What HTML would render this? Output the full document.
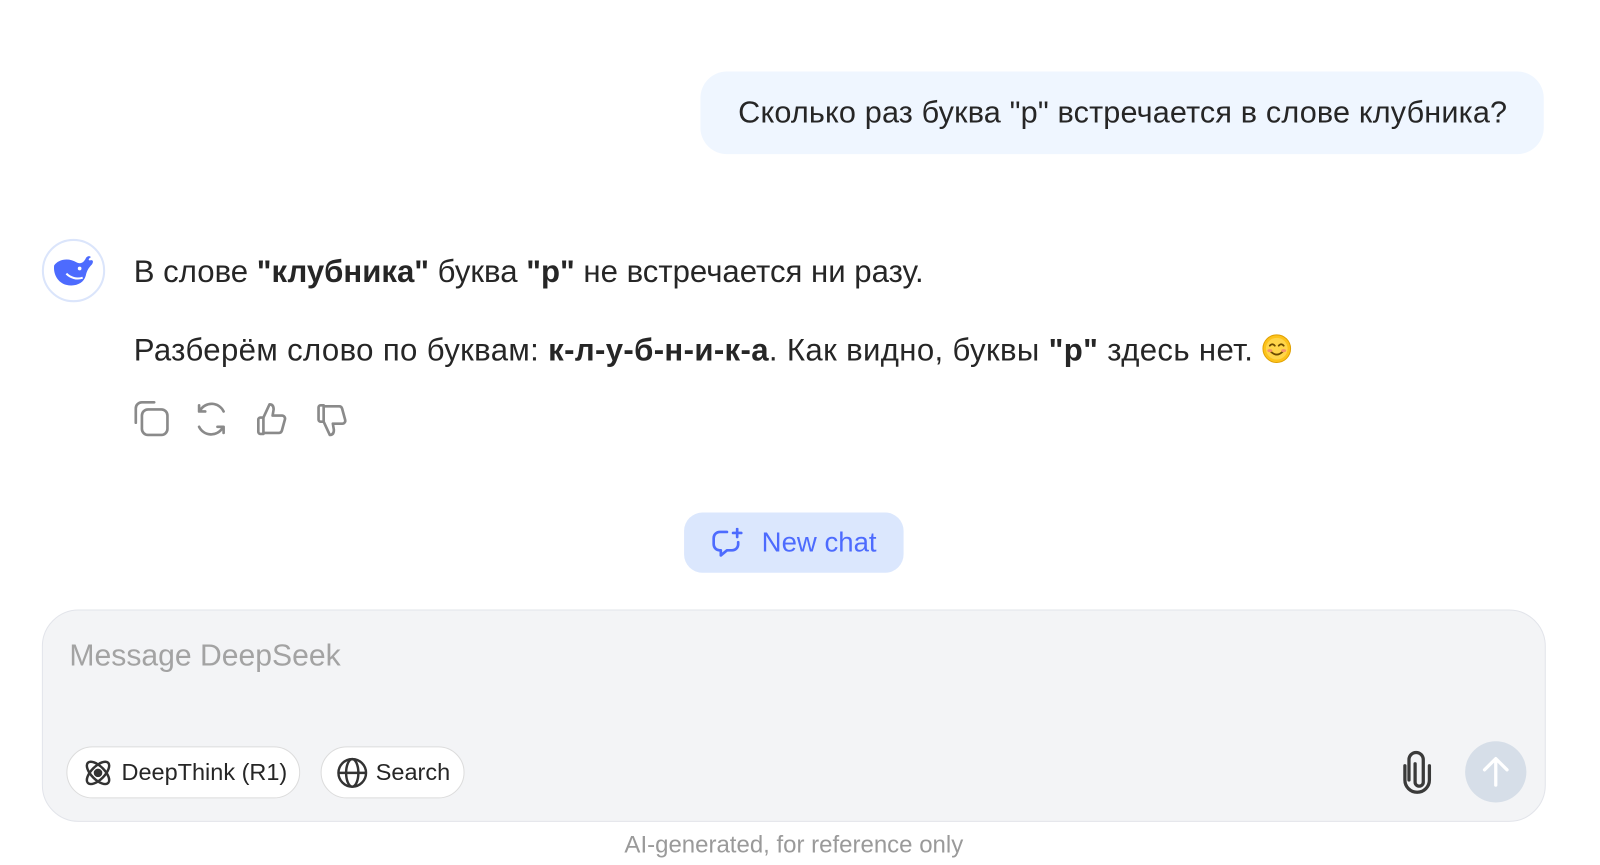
<!DOCTYPE html>
<html><head><meta charset="utf-8"><style>
*{margin:0;padding:0;box-sizing:border-box}
body{width:1600px;height:865px;background:#fff;font-family:"Liberation Sans","DejaVu Sans",sans-serif;color:#262626;position:relative;overflow:hidden}
#w{position:absolute;left:0;top:0;width:1567px;height:847px;transform:scale(1.021);transform-origin:0 0}
.abs{position:absolute}
.bubble{left:686px;top:70px;width:826px;height:81px;background:#eff6ff;border-radius:26px;font-size:30px;line-height:81px;padding-left:37px;white-space:nowrap;letter-spacing:0.15px}
.av{left:41px;top:234px;width:62px;height:62px;border-radius:50%;border:2px solid #dbe5fb;display:flex;align-items:center;justify-content:center}
.t{left:131px;font-size:30.5px;white-space:nowrap;line-height:36px}
b{font-weight:700}
.nc{left:670px;top:502px;width:215px;height:59px;background:#dbe7fd;border-radius:18px;color:#4d6bfe;font-size:27px;display:flex;align-items:center;padding-left:26px;gap:18px}
.comp{left:41px;top:597px;width:1473px;height:208px;background:#f3f4f6;border:1px solid #e2e4ea;border-radius:36px}
.pill{top:731px;height:51px;border:1.5px solid #dcdcdc;border-radius:26px;background:#fff;display:flex;align-items:center;font-size:23px;color:#262626;padding-left:14px;gap:7px}
</style></head><body><div id="w">
<div class="abs bubble">Сколько раз буква "р" встречается в слове клубника?</div>
<div class="abs av"><svg width="42" height="34" viewBox="0 0 42 34"><path d="M2 12 C6 6 16 4 24 9 C28 11 31 9 33 5 C34 3 37 2 38 4 C36 5 35 7 37 7 C40 6 41 8 39 11 C36 14 34 17 33 22 C31 30 22 33 14 31 C6 29 1 21 2 12Z" fill="#4d6bfe"/><path d="M14 20 C18 24 24 26 30 24" stroke="#fff" stroke-width="2" fill="none"/><circle cx="27" cy="15" r="1.8" fill="#fff"/></svg></div>
<div class="abs t" style="top:248px">В слове <b>"клубника"</b> буква <b>"р"</b> не встречается ни разу.</div>
<div class="abs t" style="top:325px;letter-spacing:0.35px">Разберём слово по буквам: <b>к-л-у-б-н-и-к-а</b>. Как видно, буквы <b>"р"</b> здесь нет. <svg width="29" height="29" viewBox="0 0 30 30" style="vertical-align:-3px"><circle cx="15" cy="15" r="14" fill="#fcc21b" stroke="#e0a000" stroke-width="1"/><circle cx="15" cy="15" r="11" fill="#ffd54a"/><path d="M8 12q2.5-3 5 0M17 12q2.5-3 5 0" stroke="#6b4a00" stroke-width="1.8" fill="none" stroke-linecap="round"/><path d="M9 18q6 6 12 0" stroke="#6b4a00" stroke-width="1.8" fill="none" stroke-linecap="round"/><ellipse cx="8" cy="17" rx="2.5" ry="1.5" fill="#f6916a"/><ellipse cx="22" cy="17" rx="2.5" ry="1.5" fill="#f6916a"/></svg></div>
<svg class="abs" style="left:130px;top:392px" width="220" height="38" viewBox="0 0 220 38" fill="none" stroke="#8a8a8a" stroke-width="2.6" stroke-linecap="round" stroke-linejoin="round">
<rect x="9" y="9" width="25" height="25" rx="6"/><path d="M3 22V8a6 6 0 0 1 6-6h12"/>
<path d="M89 11a13 13 0 0 0-23-1M65 5v6h6M65 26a13 13 0 0 0 23 1M89 32v-6h-6"/>
<g transform="translate(7 0)"><path d="M121 17v16h-3a2 2 0 0 1-2-2V19a2 2 0 0 1 2-2zM121 17l6-13c3 0 4 2 4 5l-1 6h9a3 3 0 0 1 3 4l-3 11a3 3 0 0 1-3 2h-15"/></g>
<g transform="translate(5 0)"><path d="M182 21V5h-3a2 2 0 0 0-2 2v12a2 2 0 0 0 2 2zM182 21l6 13c3 0 4-2 4-5l-1-6h9a3 3 0 0 0 3-4l-3-11a3 3 0 0 0-3-2h-15"/></g>
</svg>
<div class="abs nc"><svg width="32" height="30" viewBox="0 0 32 30" fill="none" stroke="#4d6bfe" stroke-width="2.6" stroke-linecap="round" stroke-linejoin="round"><path d="M16 4H9a6 6 0 0 0-6 6v6a6 6 0 0 0 6 6h1v5l6-5h5a6 6 0 0 0 6-6v-2"/><path d="M26 1v8M22 5h8"/></svg><span>New chat</span></div>
<div class="abs comp"></div>
<div class="abs" style="left:68px;top:626px;font-size:29.5px;color:#a3a3a3">Message DeepSeek</div>
<div class="abs pill" style="left:65px;width:229px"><svg width="32" height="32" viewBox="0 0 32 32" fill="none" stroke="#333" stroke-width="2.4"><ellipse cx="16" cy="16" rx="14" ry="6.5" transform="rotate(45 16 16)"/><ellipse cx="16" cy="16" rx="14" ry="6.5" transform="rotate(-45 16 16)"/><circle cx="16" cy="16" r="3" fill="#333"/></svg><span>DeepThink (R1)</span></div>
<div class="abs pill" style="left:314px;width:141px"><svg width="32" height="32" viewBox="0 0 32 32" fill="none" stroke="#333" stroke-width="2.4"><circle cx="16" cy="16" r="13.5"/><ellipse cx="16" cy="16" rx="6" ry="13.5"/><path d="M2.5 16h27"/></svg><span>Search</span></div>
<svg class="abs" style="left:1370px;top:734px" width="36" height="44" viewBox="0 0 36 44" fill="none" stroke="#3a3a3a" stroke-width="3.2" stroke-linecap="round"><path d="M10 30V10a7 7 0 0 1 14 0v22a4 4 0 0 1-8 0V14"/><path d="M4 20v14a12 12 0 0 0 24 0V20" transform="translate(2 -4)"/></svg>
<div class="abs" style="left:1435px;top:726px;width:60px;height:60px;border-radius:50%;background:#d6dee8;display:flex;align-items:center;justify-content:center"><svg width="30" height="32" viewBox="0 0 30 32" fill="none" stroke="#fff" stroke-width="3.2" stroke-linecap="round" stroke-linejoin="round"><path d="M15 29V4M4 14L15 3l11 11"/></svg></div>
<div class="abs" style="left:0;top:814px;width:1555px;text-align:center;font-size:23.5px;color:#9a9a9a">AI-generated, for reference only</div>
</div></body></html>
